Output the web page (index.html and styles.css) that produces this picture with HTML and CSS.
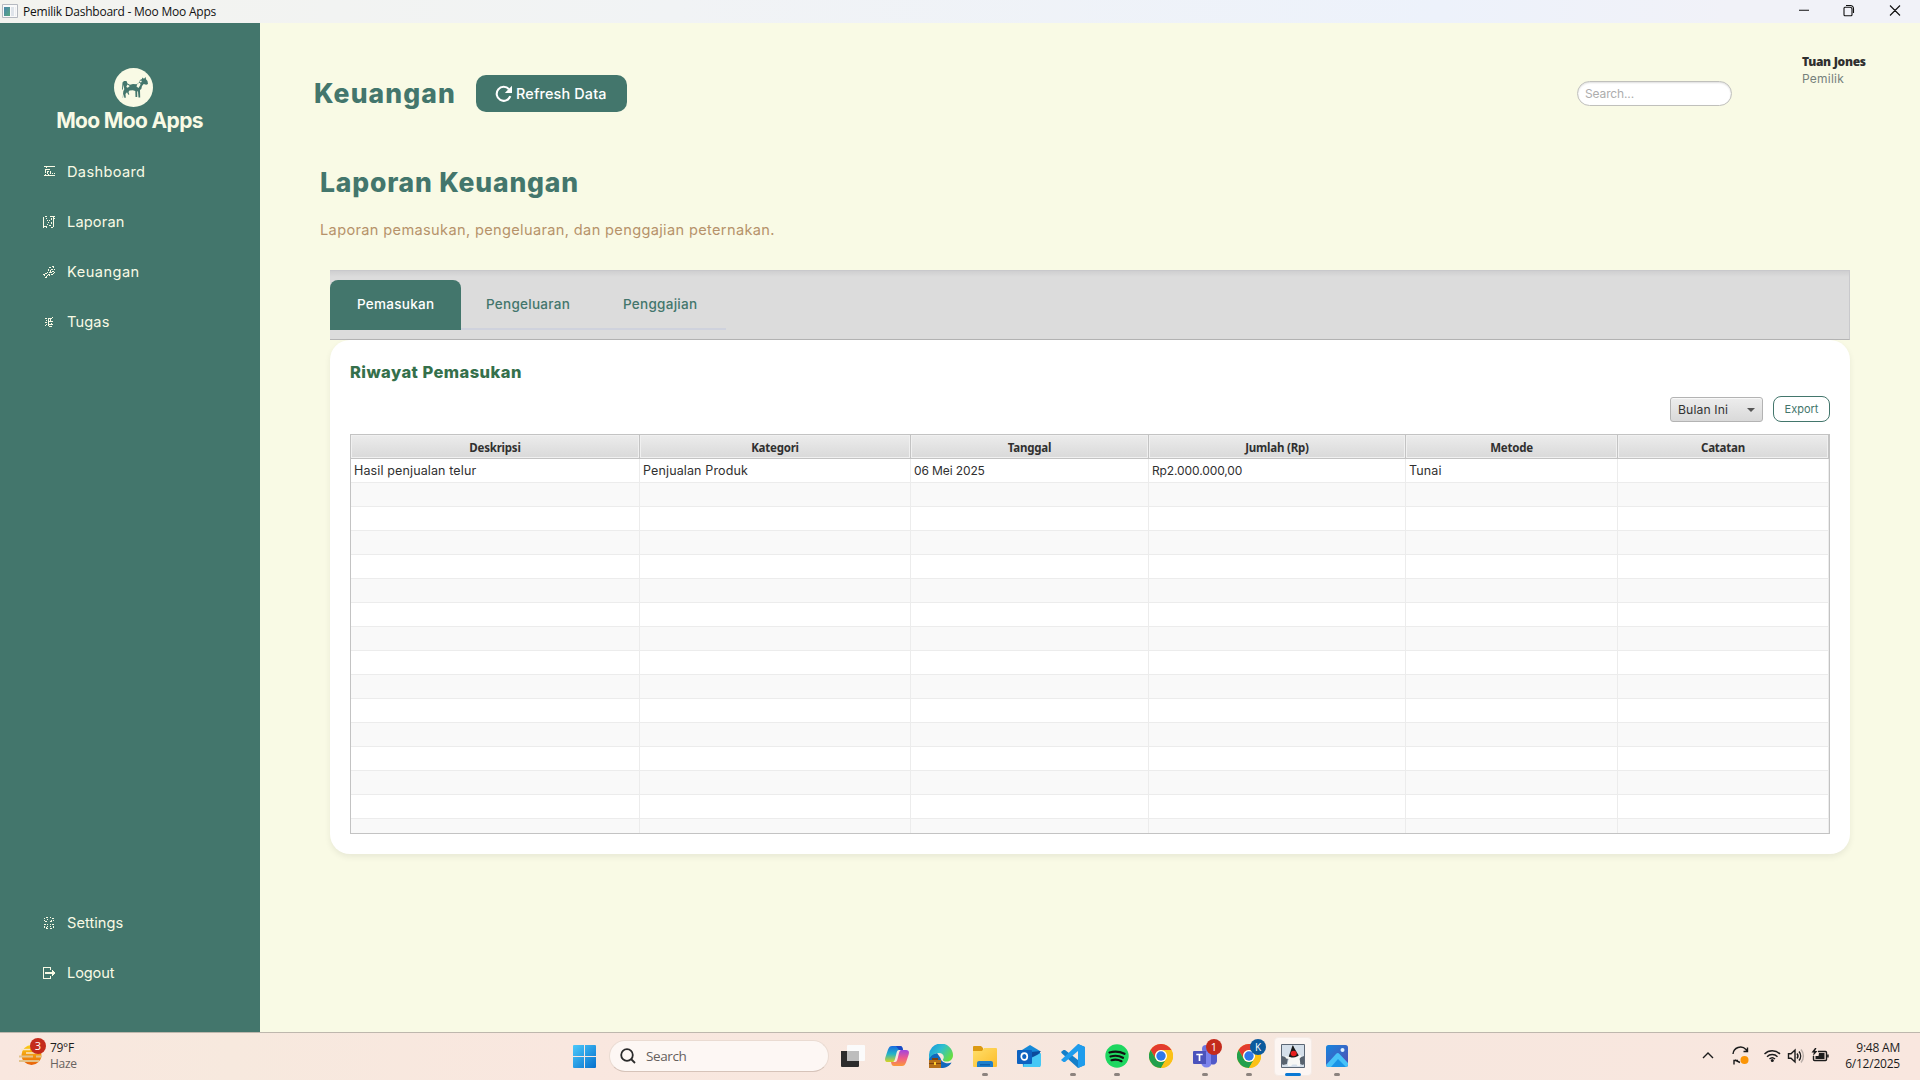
FILE: index.html
```html
<!DOCTYPE html>
<html lang="id">
<head>
<meta charset="utf-8">
<title>Pemilik Dashboard - Moo Moo Apps</title>
<link rel="stylesheet" href="styles.css">
</head>
<body>
<div class="screen">
  <header class="titlebar">
    <svg class="app-icon" width="16" height="14" viewBox="0 0 16 14"><defs><linearGradient id="ai" x1="0" y1="0" x2="1" y2="1"><stop offset="0" stop-color="#4b86ad"/><stop offset="1" stop-color="#58a880"/></linearGradient></defs><path fill="#fafafa" stroke="#b5b9c0" d="M.5.5h15v13H.5z"/><path fill="url(#ai)" d="M2 3h6v9H2z"/><path fill="#dfe4ea" d="M9 3h3v9H9z"/><path fill="#eef0f3" d="M13 3h1v9h-1z"/></svg>
    <span class="title">Pemilik Dashboard - Moo Moo Apps</span>
    <svg class="win-buttons" width="104" height="14" viewBox="0 0 104 14" fill="none" stroke="#111" stroke-width="1.1"><path d="M0 7.5h10M45.500 4.500h5.500a2 2 0 0 1 2 2V12a1 1 0 0 1-1 1h-6a1 1 0 0 1-1-1V5.500a1 1 0 0 1 1-1z" transform="translate(0 -.2)"/><path d="M47 2.500h4.500a3 3 0 0 1 3 3V10M91 2.500l10 10M101 2.500l-10 10"/></svg>
  </header>
  <div class="window">
    <aside class="sidebar">
      <div class="brand">
        <svg width="39" height="39" viewBox="0 0 39 39"><circle cx="19.500" cy="19.500" r="19.500" fill="#f9fae5"/><path fill="#43766c" d="M8.500 14.500l1.500-1.500h2.500l1 2.500 2.500 1.200 3-.7 3.500.3 2.500-1.800 1-2.500 2-1 .3-1.500 1.700 1.200 1.700-1.700.3 2.200 1.500 1.800.5 3-1.800.7-2.500-.7-1.700 2-.7 3-1.300 1 .2 7.500h-1.700l-.5-6-.8-.2v5.700h-1.700l-.2-6-2.500-.7-3.300.2-1 1.500.8 2.500-1 .3-1.300-2.500-1.500 1.700.3 3.700h-1.500l-.6-4-.7 4H8.700l.6-6.500 1-2-.8-4.500-.7 5-.8-.3z"/><path fill="#f9fae5" d="M13.300 16.500l2.500 1.500-2 1.800-1.500-.8zM23.500 15.500l2.500-.7.5 2-2 3.200-2-1.500zM25.500 13l1.800-.6.500 1.600-1.500.5z"/></svg>
        <div class="brand-name">Moo Moo Apps</div>
      </div>
      <nav class="menu">
        <a><svg class="mi" viewBox="0 0 12 12"><path d="M1 0h11v1H1zM3 1h1v1H3zM1 9h11v1H1zM2 3h5v1H2zM2 4h1v3H2zM4 5h2v1H4zM4 6h1v2H4zM7 5h1v3H7zM5 8h1v1H5zM9 7h1v1H9zM11 7h1v1h-1zM2 8h1v1H2z"/></svg><span>Dashboard</span></a>
        <a class="m2"><svg class="mi" viewBox="0 0 12 12"><path d="M0 1h1v11H0zM1 10h3v1H1zM2 0h2v1H2zM3 2h1v1H3zM4 4h1v1H4zM6 4h1v1H6zM5 6h1v1H5zM7 0h2v1H7zM9 0h3v1H9zM10 1h1v10h-1zM8 2h1v2H8zM11 2h1v1h-1zM4 8h1v1H4zM6 9h2v1H6zM8 11h2v1H8zM3 11h1v1H3zM8 6h1v2H8z"/></svg><span>Laporan</span></a>
        <a class="m3"><svg class="mi" viewBox="0 0 12 12"><path d="M9 0h2v1H9zM6 1h2v1H6zM5 3h1v2H5zM8 3h2v1H8zM7 4h1v2H7zM10 1h1v1h-1zM11 3h1v1h-1zM9 5h2v1H9zM6 6h3v1H6zM11 6h1v1h-1zM2 7h2v1H2zM0 8h2v1H0zM4 6h1v1H4zM5 8h2v1H5zM8 8h2v1H8zM1 9h1v1H1zM3 10h1v2H3zM4 9h1v1H4zM2 11h1v1H2zM6 9h1v1H6zM10 7h1v1h-1z"/></svg><span>Keuangan</span></a>
        <a class="m4"><svg class="mi" viewBox="0 0 12 12"><path d="M2 2h2v1H2zM5 2h4v1H5zM9 1h1v1H9zM3 4h1v1H3zM5 3h1v7H5zM6 5h4v1H6zM7 3h1v3H7zM2 6h2v1H2zM6 8h4v1H6zM8 7h1v2H8zM2 9h1v1H2zM3 8h1v1H3zM6 10h3v1H6z"/></svg><span>Tugas</span></a>
      </nav>
      <nav class="menu menu-bottom">
        <a class="m5"><svg class="mi" viewBox="0 0 12 12"><path d="M1 1h1v1H1zM3 0h2v1H3zM7 0h1v1H7zM9 1h2v1H9zM1 3h1v1H1zM4 2h1v1H4zM2 4h2v1H2zM8 3h1v1H8zM10 3h1v1h-1zM7 4h2v1H7zM1 7h2v1H1zM4 7h1v1H4zM7 7h1v1H7zM9 7h2v1H9zM1 9h1v2H1zM4 9h1v1H4zM3 11h2v1H3zM7 9h1v1H7zM10 9h1v2h-1zM7 11h2v1H7zM3 10h1v1H3z"/></svg><span>Settings</span></a>
        <a class="m6"><svg class="mi" viewBox="0 0 12 12"><path d="M0 0h8v3H7V1H1v10h6V9h1v3H0zM2 5h7V3h1v1h1v1h1v2h-1v1h-1v1H9V7H2z"/></svg><span>Logout</span></a>
      </nav>
    </aside>
    <main class="content">
      <div class="topbar">
        <h1>Keuangan</h1>
        <button class="refresh"><svg width="18" height="18" viewBox="0 0 18 18"><path fill="none" stroke="#fff" stroke-width="2.100" d="M15.300 11.200A7 7 0 1 1 14 4.200"/><path fill="#fff" d="M17 .8V8H9.800z"/></svg><span>Refresh Data</span></button>
        <div class="search-field">Search...</div>
        <div class="user"><b>Tuan Jones</b><span>Pemilik</span></div>
      </div>
      <h2>Laporan Keuangan</h2>
      <p class="subtitle">Laporan pemasukan, pengeluaran, dan penggajian peternakan.</p>
      <div class="tabs">
        <div class="tab active">Pemasukan</div><div class="tab t2">Pengeluaran</div><div class="tab t3">Penggajian</div>
      </div>
      <section class="card">
        <h3>Riwayat Pemasukan</h3>
        <div class="actions">
          <div class="combo"><span>Bulan Ini</span><i></i></div>
          <button class="export">Export</button>
        </div>
        <div class="table">
          <div class="row head"><div>Deskripsi</div><div>Kategori</div><div>Tanggal</div><div>Jumlah (Rp)</div><div>Metode</div><div>Catatan</div></div>
          <div class="row"><div>Hasil penjualan telur</div><div>Penjualan Produk</div><div class="num">06 Mei 2025</div><div class="num">Rp2.000.000,00</div><div>Tunai</div><div></div></div>
          <div class="row"><div></div><div></div><div></div><div></div><div></div><div></div></div>
          <div class="row"><div></div><div></div><div></div><div></div><div></div><div></div></div>
          <div class="row"><div></div><div></div><div></div><div></div><div></div><div></div></div>
          <div class="row"><div></div><div></div><div></div><div></div><div></div><div></div></div>
          <div class="row"><div></div><div></div><div></div><div></div><div></div><div></div></div>
          <div class="row"><div></div><div></div><div></div><div></div><div></div><div></div></div>
          <div class="row"><div></div><div></div><div></div><div></div><div></div><div></div></div>
          <div class="row"><div></div><div></div><div></div><div></div><div></div><div></div></div>
          <div class="row"><div></div><div></div><div></div><div></div><div></div><div></div></div>
          <div class="row"><div></div><div></div><div></div><div></div><div></div><div></div></div>
          <div class="row"><div></div><div></div><div></div><div></div><div></div><div></div></div>
          <div class="row"><div></div><div></div><div></div><div></div><div></div><div></div></div>
          <div class="row"><div></div><div></div><div></div><div></div><div></div><div></div></div>
          <div class="row"><div></div><div></div><div></div><div></div><div></div><div></div></div>
          <div class="row"><div></div><div></div><div></div><div></div><div></div><div></div></div>
        </div>
      </section>
    </main>
  </div>
  <footer class="taskbar">
    <svg width="0" height="0" class="defs"><defs>
      <linearGradient id="win" x1="0" y1="0" x2="1" y2="1"><stop offset="0" stop-color="#4cc9fb"/><stop offset="1" stop-color="#0670cd"/></linearGradient>
      <linearGradient id="sun" x1="0" y1="0" x2="0" y2="1"><stop offset="0" stop-color="#fcd116"/><stop offset="1" stop-color="#e8600a"/></linearGradient>
      <linearGradient id="cp1" x1="0" y1="0" x2="0" y2="1"><stop offset="0" stop-color="#1a6ae0"/><stop offset=".5" stop-color="#22b4c8"/><stop offset="1" stop-color="#d8d420"/></linearGradient>
      <linearGradient id="cp2" x1="0" y1="0" x2="0" y2="1"><stop offset="0" stop-color="#a044e0"/><stop offset=".5" stop-color="#ee5a8e"/><stop offset="1" stop-color="#fb9a38"/></linearGradient>
      <linearGradient id="ed" x1="0" y1="0" x2="1" y2=".6"><stop offset="0" stop-color="#1493dd"/><stop offset=".5" stop-color="#30bfd0"/><stop offset="1" stop-color="#66dd44"/></linearGradient>
      <linearGradient id="fo" x1="0" y1="0" x2="1" y2="1"><stop offset="0" stop-color="#ffdf6b"/><stop offset="1" stop-color="#fcbc2a"/></linearGradient>
      <linearGradient id="ph" x1="0" y1="0" x2="1" y2="1"><stop offset="0" stop-color="#1585de"/><stop offset="1" stop-color="#584bb0"/></linearGradient>
      <g id="chrome"><circle cx="12" cy="12" r="12" fill="#fbc116"/><path fill="#e33b2e" d="M1.600 6A12 12 0 0 1 22.400 6H12a6 6 0 0 0-5.200 9z"/><path fill="#22a04c" d="M1.600 6A12 12 0 0 0 12 24l5.200-9A6 6 0 0 1 6.800 15z"/><path fill="#fbc116" d="M22.400 6A12 12 0 0 1 12 24l5.200-9A6 6 0 0 0 12 6z"/><circle cx="12" cy="12" r="6" fill="#fff"/><circle cx="12" cy="12" r="4.700" fill="#2f78ea"/></g>
    </defs></svg>
    <div class="weather">
      <div class="weather-icon"><svg width="24" height="24" viewBox="0 0 24 24"><circle cx="12.500" cy="12" r="10" fill="url(#sun)"/><path stroke="#e3c28a" stroke-width="2" d="M0 13.500h14M17 13.500h6M0 18h20"/><path stroke="#f9e6c8" stroke-width="1.400" d="M2 6.500h9M7 10h12"/></svg><span class="badge">3</span></div>
      <div class="weather-text"><span>79°F</span><span class="dim">Haze</span></div>
    </div>
    <div class="apps">
      <div class="app"><svg width="23" height="23" viewBox="0 0 23 23"><path fill="url(#win)" d="M0 1a1 1 0 0 1 1-1h10v11H0zM12 0h10a1 1 0 0 1 1 1v10H12zM0 12h11v11H1a1 1 0 0 1-1-1zM12 12h11v10a1 1 0 0 1-1 1H12z"/></svg></div>
      <div class="pill"><svg width="16" height="16" viewBox="0 0 16 16" fill="none" stroke="#2b2b2b" stroke-width="1.800"><circle cx="7" cy="7" r="5.800"/><path d="M11 11l4 4"/></svg><span>Search</span></div>
      <div class="app"><svg width="24" height="24" viewBox="0 0 24 24"><path fill="#2c2c2c" d="M0 7h18v15a1 1 0 0 1-1 1H1a1 1 0 0 1-1-1z"/><path fill="#fbfbfb" d="M7 1h16a1 1 0 0 1 1 1v14a1 1 0 0 1-1 1H6V2a1 1 0 0 1 1-1z"/><path fill="#bdbdbd" d="M6 7h12v10H6z"/></svg></div>
      <div class="app"><svg width="24" height="24" viewBox="0 0 24 24"><path fill="url(#cp1)" d="M7 2h8c2 0 2.500 1.500 3 4h-4c-1.500 0-2 1-2.500 3l-1.500 6c-.7 2.500-1.500 3-3 3H3c-3 0-3.500-2-2.500-5L3 5.500C4 3 5 2 7 2z"/><path fill="url(#cp2)" d="M17 22H9c-2 0-2.500-1.500-3-4h4c1.500 0 2-1 2.500-3L14 9c.7-2.500 1.500-3 3-3h4c3 0 3.500 2 2.500 5L21 18.500c-1 2.500-2 3.500-4 3.500z"/><path fill="#1b49c4" d="M11 2h4c2 0 2.500 1.500 3 4h-4z"/></svg></div>
      <div class="app"><svg width="24" height="24" viewBox="0 0 24 24"><path fill="#1168bd" d="M0 11v5a12 8 0 0 0 12 8c5 0 9-2 10.500-5.500-3 1.500-10 1-11-4.500L8 9z"/><path fill="url(#ed)" d="M0 12A12 12 0 0 1 24 11c0 4-2.500 6.500-6 6.500-3 0-4.500-1-4-2 2-3 0-6.500-4-6.500C5 9 1 12 0 16z"/><path fill="#b5701c" d="M0 16h12v8H0z"/><path fill="#7c4312" d="M3 14h6v2H3zM0 19h12v1H0z"/><path fill="#ffd02e" d="M5 18h2v3H5z"/></svg></div>
      <div class="app run"><svg width="24" height="24" viewBox="0 0 24 24"><path fill="#dc9a12" d="M0 3a1 1 0 0 1 1-1h7l2 2v4H0z"/><path fill="url(#fo)" d="M0 7h9l2-3h12a1 1 0 0 1 1 1v17a1 1 0 0 1-1 1H1a1 1 0 0 1-1-1z"/><path fill="#1d7fcb" d="M4 23v-4a2 2 0 0 1 2-2h12a2 2 0 0 1 2 2v4z"/><path fill="#0d5ea8" d="M7 20h10v1.500H7z"/></svg></div>
      <div class="app"><svg width="24" height="24" viewBox="0 0 24 24"><path fill="#1589d8" d="M5 6l8-5 10 6v15a1 1 0 0 1-1 1H6z"/><path fill="#0b4b9c" d="M14 8l10-1-8 9z"/><path fill="#46c8f5" d="M8 17l16-8v12a2 2 0 0 1-2 2H6z"/><path fill="#0d62c0" d="M1 6h13a1 1 0 0 1 1 1v12a1 1 0 0 1-1 1H1a1 1 0 0 1-1-1V7a1 1 0 0 1 1-1z"/><ellipse cx="7.300" cy="12.500" rx="3" ry="3.400" fill="none" stroke="#fff" stroke-width="1.700"/></svg></div>
      <div class="app run"><svg width="24" height="24" viewBox="0 0 24 24"><path fill="#147fc9" d="M17 0l7 3v18l-7 3L1 9.500 0 8l2.500-2L4 6l13 10z"/><path fill="#1f9cec" d="M17 0l7 3v18l-7 3V7L4 18l-1.500 0L0 16z"/></svg></div>
      <div class="app run"><svg width="24" height="24" viewBox="0 0 24 24"><circle cx="12" cy="12" r="11.700" fill="#1ed760"/><path fill="none" stroke="#111" stroke-linecap="round" stroke-width="2.200" d="M4.500 8.500c5-1.500 10.500-1 15 1.300M5.500 12.500c4-1.200 8.800-.8 12.500 1.300M6.500 16.200c3.500-1 7-.6 10 1"/></svg></div>
      <div class="app"><svg width="24" height="24" viewBox="0 0 24 24"><use href="#chrome"/></svg></div>
      <div class="app run"><svg width="24" height="24" viewBox="0 0 24 24"><circle cx="13" cy="5" r="4" fill="#6d74e0"/><path fill="#7b83eb" d="M8 8h11v10a5.500 5.500 0 0 1-11 0z"/><path fill="#5059c9" d="M18 9h6v7a4 4 0 0 1-6 4z"/><path fill="#4b53bc" d="M1 7h12v13H1a1 1 0 0 1-1-1V8a1 1 0 0 1 1-1z"/><path stroke="#fff" stroke-width="1.700" fill="none" d="M3.300 10.500h6.400M6.500 10v7"/></svg><span class="badge">1</span></div>
      <div class="app run"><svg width="24" height="24" viewBox="0 0 24 24"><use href="#chrome"/></svg><span class="badge blue">K</span></div>
      <div class="app current"><svg width="24" height="24" viewBox="0 0 24 24"><path fill="#d5dfea" stroke="#5c6775" d="M.5.5h23v23H.5z"/><path fill="#59636f" d="M1 12l6 2-1 6-4 1-1-1zM23 12l-5 2 1 6 3 1 1-1z"/><path fill="#1a1a1a" d="M11.500 1.500c.8 0 1 .5 1.500 2l3.500 6c1.500 2 2 4.500 1.500 6.500H8c-1-3 .5-5.500 1-7z"/><path fill="#f7f7f5" d="M9 13c2 .8 5 .8 7-.5l3-1.500 1.500 1-2 3c.8 2.500 1 5 .3 7h-2.300l-1-1.500h-4L10 22H7c-.8-2 .3-5 1-7l-3-.5L4 12z"/><ellipse cx="12.700" cy="9.500" rx="3" ry="2.700" fill="#e61e1e"/></svg></div>
      <div class="app run"><svg width="22" height="22" viewBox="0 0 22 22"><rect width="22" height="22" rx="2.500" fill="url(#ph)"/><path fill="#47c2f8" d="M0 20l10-11c1-1.200 2.500-1.200 3.500 0L22 18v2a2 2 0 0 1-2 2H2a2 2 0 0 1-2-2z"/><path fill="#1b94e6" d="M5 22l7-8 8 8z"/><circle cx="16.500" cy="5" r="2" fill="#dff0ff"/></svg></div>
    </div>
    <div class="tray">
      <svg width="128" height="24" viewBox="0 0 128 24" fill="none" stroke="#1c1c1c" stroke-width="1.400"><path d="M1 14l5-5 5 5"/><path d="M31 10a7.500 7.500 0 0 1 13-4.500l1 1.500M45.500 3.500v4h-4M38 18.500l-5-2.500M32 20.500v-4h4"/><circle cx="42.500" cy="16" r="4" fill="#fb9506" stroke="none"/><path d="M62.500 10a11 11 0 0 1 15.500 0M65 12.700a7.500 7.500 0 0 1 10.500 0M67.500 15a4 4 0 0 1 5.500 0"/><circle cx="70.300" cy="16.500" r="1.500" fill="#1c1c1c" stroke="none"/><path d="M86.500 9.700h2.500l4-3.700v12l-4-3.700h-2.500zM95 9.500a4 4 0 0 1 0 5M97 7.500a7 7 0 0 1 0 9"/><path stroke="#b9aea8" d="M99 5.500a10 10 0 0 1 0 13"/><path d="M116 7.500h7.500a1 1 0 0 1 1 1v7a1 1 0 0 1-1 1h-11a1 1 0 0 1-1-1V12M126 10.500v3"/><path fill="#1c1c1c" stroke="none" d="M117 9h5.500v6h-9v-3h3zM113 4l-3.500 4.500h2.300L111 12l4.500-5h-2.500l1.500-3z"/></svg>
      <div class="clock"><span>9:48 AM</span><span>6/12/2025</span></div>
    </div>
  </footer>
</div>
</body>
</html>
```
FILE: styles.css
```css
* { box-sizing: border-box; }
body { margin: 0; background: #f9fae5; font-family: Inter, sans-serif; }
h1, h2, h3, p { margin: 0; }
button { font: inherit; }
.screen { width: 1920px; height: 1080px; display: flex; flex-direction: column; overflow: hidden; }

.titlebar { height: 23px; flex: none; display: flex; align-items: center; padding: 0 17px 0 2px; background: linear-gradient(90deg, #f3f3ef 0%, #f1f3f5 35%, #edf2fb 75%, #f1f2f8 90%); font: 12px/22px "Open Sans", sans-serif; color: #111; }
.app-icon { margin: -2px 5px 0 0; }
.title { flex: 1; letter-spacing: -.228px; margin-top: 1px; }
.win-buttons { margin: 0 0 3px 0; }

.window { flex: 1; display: flex; min-height: 0; }
.sidebar { width: 260px; flex: none; background: #43766c; color: #f9fae5; display: flex; flex-direction: column; }
.brand { display: flex; flex-direction: column; align-items: center; padding: 45px 0 0 7px; height: 124px; }
.brand-name { font-weight: 700; font-size: 21px; line-height: 24px; letter-spacing: -.65px; margin: 2px 8px 0 0; white-space: nowrap; }
.menu { display: flex; flex-direction: column; }
.menu a { height: 50px; display: flex; align-items: center; gap: 12px; padding-left: 43px; font-size: 14.6px; letter-spacing: .34px; }
.menu .m2 { letter-spacing: .15px; }
.menu .m3 { letter-spacing: .46px; }
.menu .m4 { letter-spacing: .14px; }
.menu .m5 { letter-spacing: .05px; }
.menu .m6 { letter-spacing: -.12px; }
.mi { width: 12px; height: 12px; fill: #f9fae5; shape-rendering: crispEdges; }
.menu-bottom { margin-top: auto; padding-bottom: 34px; }

.content { flex: 1; padding: 28px 70px 0 70px; }
.topbar { display: flex; align-items: flex-start; height: 107px; margin-left: -16px; }
h1, h2 { font-size: 26.5px; line-height: 34px; font-weight: 800; color: #43766c; white-space: nowrap; }
h1 { letter-spacing: 1.1px; width: 162px; margin-top: 25px; }
.refresh { width: 151px; height: 37px; margin-top: 24px; padding: 0 0 0 19px; border: 0; border-radius: 10px; background: #43766c; color: #fff; display: flex; align-items: center; gap: 3px; font-weight: 500; font-size: 14.4px; letter-spacing: .16px; white-space: nowrap; }
.refresh span { margin-top: -1px; }
.search-field { width: 155px; height: 25px; margin: 30px 70px 0 auto; padding-left: 7px; border: 1px solid #c0c0bc; border-radius: 13px; background: #fff; box-shadow: inset 0 1px 2px #ddd; color: #adadad; font-size: 12px; line-height: 24px; letter-spacing: -.13px; }
.user { width: 48px; display: flex; flex-direction: column; color: #2f2f2f; font: 700 12px/17px "Noto Sans", sans-serif; letter-spacing: -.3px; white-space: nowrap; margin-top: 2px; }
.user span { font: 400 12px/17px Inter, sans-serif; color: #76817c; letter-spacing: .22px; }
h2 { letter-spacing: .82px; margin: 7px 0 0 -10px; }
.subtitle { margin: 16px 0 -1px -10px; padding-top: 6px; height: 48px; color: #b6926a; font-size: 14.6px; line-height: 18px; letter-spacing: .34px; }

.tabs { height: 70px; margin-top: 8px; display: flex; padding-top: 9px; background: linear-gradient(#cfcfd0, #dcdcdc 6px); border: solid #c9c9cc; border-width: 1px 1px 1px 0; border-bottom-color: #b4b4b4; font-size: 13.5px; font-weight: 500; color: #43766c; }
.tab { height: 50px; width: 133px; line-height: 49px; padding-left: 23px; border-bottom: 2px solid #cfd2dd; letter-spacing: .27px; }
.tab.active { width: 131px; padding-left: 27px; background: #43766c; border-color: #43766c; border-radius: 8px 8px 0 0; color: #fff; }
.tab.t2 { padding-left: 25px; width: 135px; }
.tab.t3 { width: 130px; padding-left: 27px; }

.card { height: 514px; padding: 20px; border-radius: 20px; background: #fff; box-shadow: 0 3px 6px rgba(0,0,0,.07); }
h3 { font-size: 16.5px; line-height: 24px; font-weight: 800; color: #35704b; letter-spacing: .45px; }
.actions { display: flex; justify-content: flex-end; align-items: flex-start; gap: 10px; height: 38px; margin-top: 12px; }
.combo { width: 93px; height: 25px; margin-top: 1px; padding: 0 7px; display: flex; justify-content: space-between; align-items: center; border: 1px solid #b3b3b3; border-radius: 3px; background: linear-gradient(#ededed, #d9d9d9); box-shadow: inset 0 1px #f8f8f8; color: #333; font-size: 12.2px; letter-spacing: .12px; }
.combo i { border: 4px solid transparent; border-top-color: #555; border-bottom: 0; }
.export { width: 57px; height: 26px; padding: 0; border: 1px solid #43766c; border-radius: 8px; background: #fff; color: #43766c; font-size: 11px; }

.table { height: 400px; border: 1px solid #c3c3c3; overflow: hidden; color: #303030; font-size: 12.5px; }
.row { display: grid; grid-template-columns: 289px 271px 238px 257px 212px 211px; height: 24px; }
.row > div { border: solid #ececec; border-width: 0 1px 1px 0; padding-left: 3px; line-height: 23px; letter-spacing: .13px; white-space: nowrap; }
.row > .num { font-size: 12px; letter-spacing: -.11px; }
.row:nth-child(odd) > div { background: #f9f9f9; }
.row.head > div { padding: 2px 0 0; border-color: #c3c3c3; background: linear-gradient(#ececec, #d9d9d9); box-shadow: inset 0 0 0 1px #f0f0f0; text-align: center; font: 700 11.5px/21px "Noto Sans", sans-serif; letter-spacing: -.22px; }

.taskbar { height: 48px; flex: none; display: grid; grid-template-columns: 562px auto 1fr; border-top: 1px solid #beb7ad; background: linear-gradient(90deg, #f9e7df, #f7e9de 12%, #f9e7df 30%, #f6e7de 60%, #f9e7df); font-family: "Open Sans", sans-serif; color: #1c1c1c; }
.defs { position: absolute; }
.weather { display: flex; gap: 7px; padding-left: 19px; font-size: 12px; line-height: 16px; letter-spacing: -.3px; }
.weather-icon { position: relative; width: 24px; padding-top: 10px; }
.weather-text { display: flex; flex-direction: column; padding-top: 7px; }
.dim { color: #686360; }
.badge { position: absolute; left: 11px; top: 5px; width: 16px; height: 16px; border-radius: 50%; background: #c42b1c; color: #fff; font-size: 11px; line-height: 16px; text-align: center; letter-spacing: 0; }
.apps { display: flex; }
.app { width: 44px; height: 47px; position: relative; display: flex; align-items: center; justify-content: center; }
.app svg { margin-top: -1px; }
.pill { width: 220px; height: 32px; margin: 7px 2px 0 3px; padding-left: 10px; display: flex; align-items: center; gap: 10px; border: 1px solid #eadbd2; border-bottom-color: #d6c3b9; border-radius: 16px; background: #fdf7f4; font-size: 13.5px; color: #65605d; letter-spacing: -.4px; }
.pill span { margin-top: -1px; }
.app .badge { left: 23px; top: 6px; }
.app .badge.blue { background: #0b5a9d; font-size: 10px; }
.run::after, .current::after { content: ""; position: absolute; bottom: 4px; left: 19px; width: 6px; height: 3px; border-radius: 2px; background: #8c837e; }
.current::before { content: ""; position: absolute; inset: 4px 3px; border-radius: 4px; background: #fdf6f3; border: 1px solid #f5ebe6; }
.current svg { position: relative; }
.current::after { left: 14px; width: 16px; background: #0a78d4; }
.tray { display: flex; justify-content: flex-end; padding-right: 20px; gap: 15px; }
.tray svg { margin-top: 11px; }
.clock { display: flex; flex-direction: column; align-items: flex-end; padding-top: 7px; font-size: 12px; line-height: 16px; letter-spacing: -.22px; }
```
